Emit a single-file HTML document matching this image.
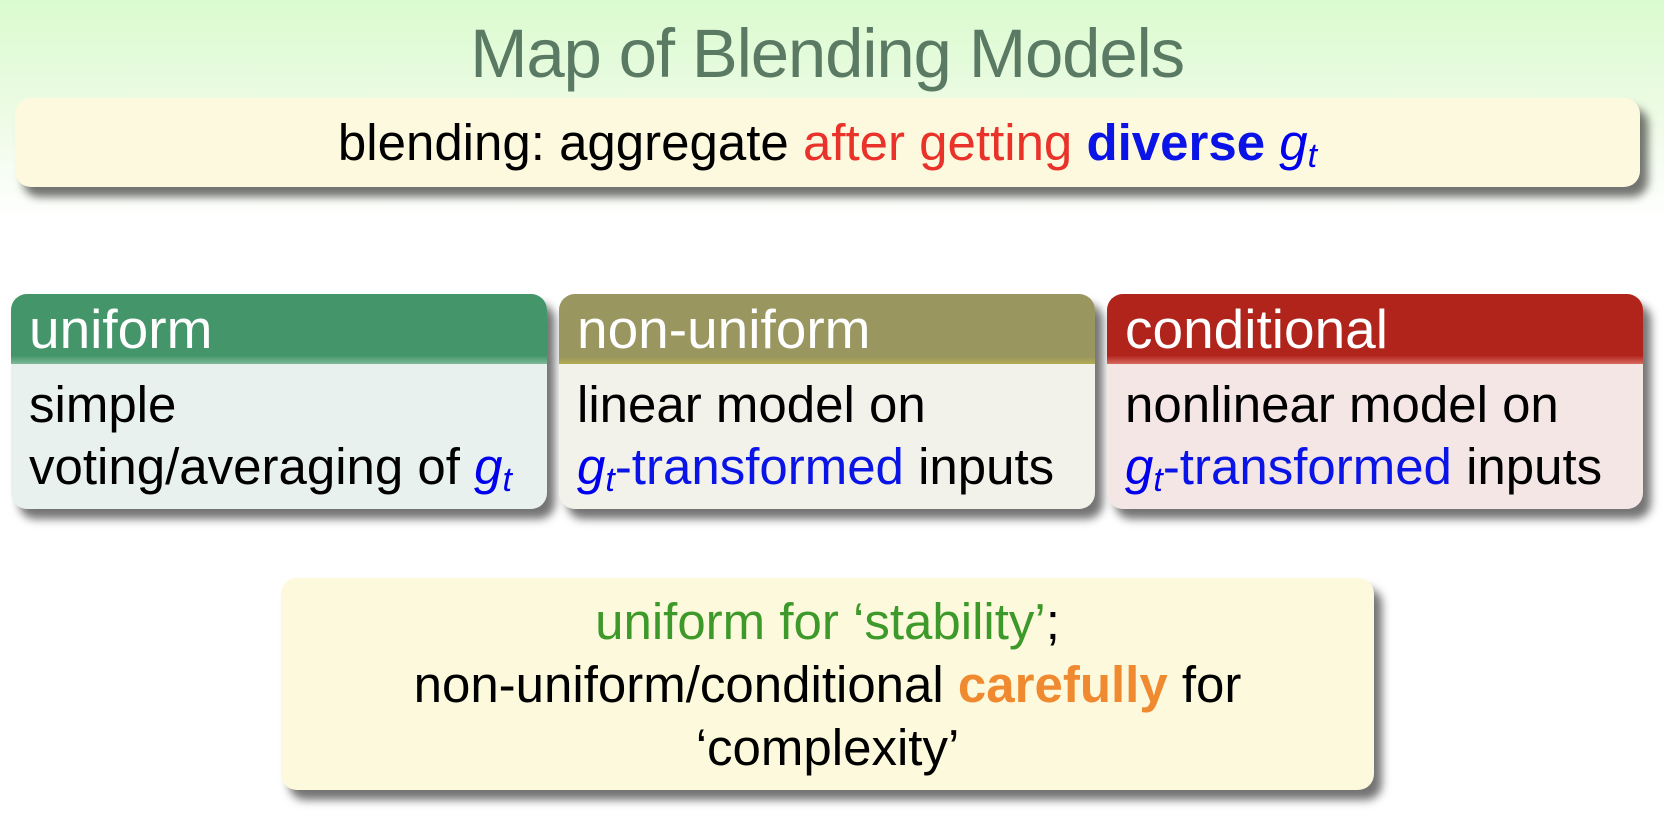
<!DOCTYPE html>
<html><head><meta charset="utf-8"><style>
body{margin:0;width:1664px;height:826px;overflow:hidden;font-family:"Liberation Sans",sans-serif;background:linear-gradient(#dafbcf 0px,#eefbe6 120px,#fff 220px);position:relative}
.t{position:absolute;left:-5px;width:1664px;text-align:center;top:14px;font-size:69px;color:#5b7a64;letter-spacing:-1.2px}
.box{position:absolute;border-radius:16px;box-shadow:8px 10px 9px rgba(0,0,0,.55)}
.top{left:15px;top:98px;width:1625px;height:89px;background:#fdf9de;text-align:center;font-size:51px;line-height:89px}
.c{top:294px;height:215px;width:536px;overflow:hidden}
.h{height:70px;color:#fff;font-size:55px;line-height:70px;padding-left:18px}
.b{padding-left:18px;font-size:51px;line-height:62px;padding-top:10px}
.bot{left:281px;top:578px;width:1093px;height:212px;background:#fdf9dc;text-align:center;font-size:51px;line-height:63px;padding-top:12px;box-sizing:border-box}
.g{color:#0000ee;font-style:italic}.g sub{font-size:34px;vertical-align:-7px}
</style></head><body>
<div class="t">Map of Blending Models</div>
<div class="box top">blending: aggregate <span style="color:#e8322a">after getting</span> <b style="color:#0a14e6">diverse</b> <span class="g">g<sub>t</sub></span></div>
<div class="box c" style="left:11px;background:#e8f1ed"><div class="h" style="background:linear-gradient(#44966a 88%,#7fb89a)">uniform</div><div class="b">simple<br>voting/averaging of <span class="g">g<sub>t</sub></span></div></div>
<div class="box c" style="left:559px;background:#f3f2ea"><div class="h" style="background:linear-gradient(#9a9660 90%,#b3ad50)">non-uniform</div><div class="b">linear model on<br><span style="color:#0a14e6"><span class="g">g<sub>t</sub></span>-transformed</span> inputs</div></div>
<div class="box c" style="left:1107px;background:#f5e6e6"><div class="h" style="background:linear-gradient(#b0241c 88%,#d86a60)">conditional</div><div class="b">nonlinear model on<br><span style="color:#0a14e6"><span class="g">g<sub>t</sub></span>-transformed</span> inputs</div></div>
<div class="box bot"><span style="color:#3d9a2a">uniform for ‘stability’</span>;<br>non-uniform/conditional <b style="color:#f08a30">carefully</b> for<br>‘complexity’</div>
</body></html>
